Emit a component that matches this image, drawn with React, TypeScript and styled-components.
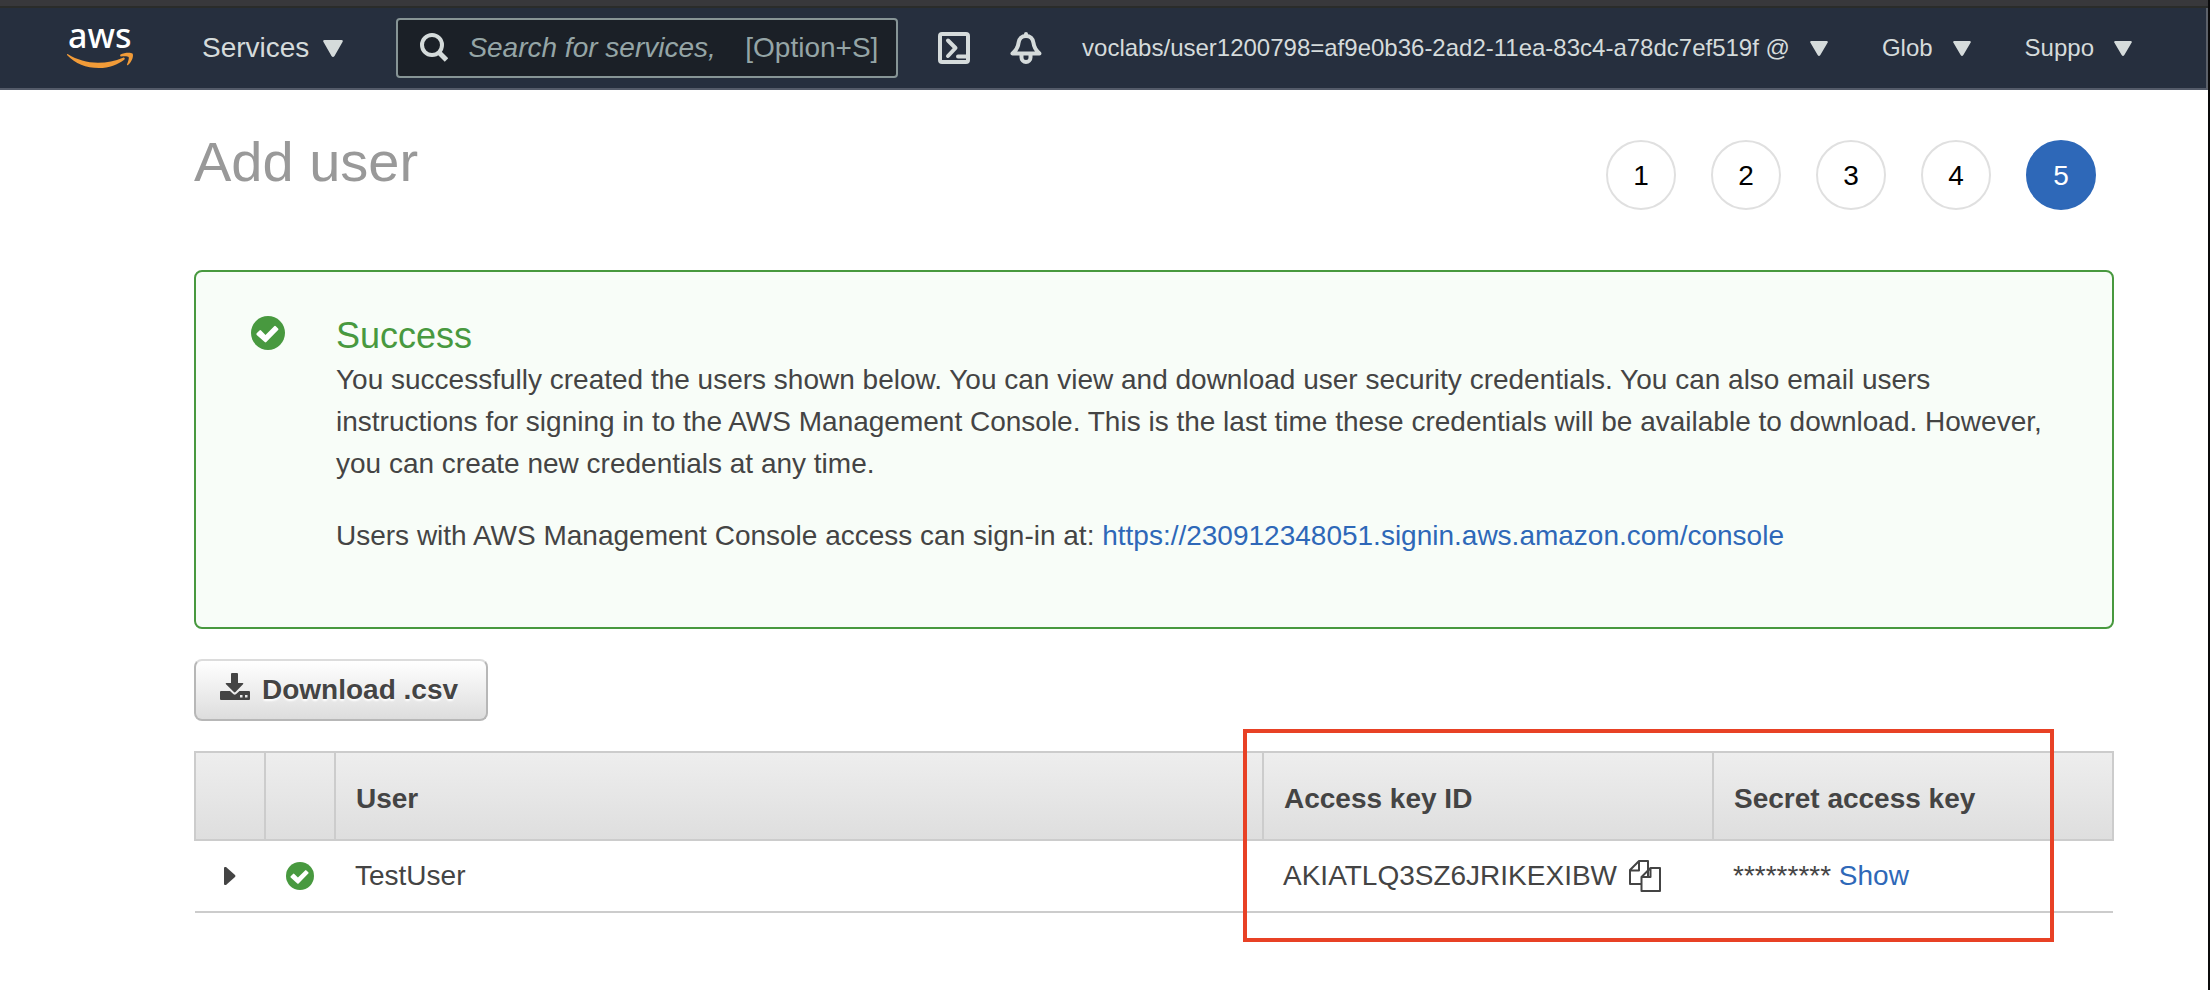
import React from "react";
import styled, { createGlobalStyle } from "styled-components";

const GlobalStyle = createGlobalStyle`
  * { box-sizing: border-box; }
  html { background: #fff; }
  body {
    margin: 0;
    font-family: "Liberation Sans", Arial, sans-serif;
    font-size: 28px;
    line-height: 42px;
    color: #444;
  }
  button, input { font: inherit; color: inherit; }
`;

const Page = styled.div`
  min-height: 100vh;
  border-right: 2px solid #0b0b0c;
`;

const WindowEdge = styled.div`
  height: 8px;
  background: #38383b;
  border-bottom: 2px solid #2a2c2a;
`;

const Header = styled.header`
  display: flex;
  align-items: center;
  height: 82px;
  padding: 0 74px 0 66px;
  background: #262f3e;
  border-bottom: 2px solid #545b69;
  border-right: 2px solid #5c616a;
  color: #d5dbdb;
`;

const LogoLink = styled.a`
  display: flex;
  margin-right: 68px;
`;

const NavButton = styled.button<{ $small?: boolean; $gap: number }>`
  display: flex;
  align-items: center;
  gap: ${(p) => p.$gap}px;
  padding: 0;
  border: 0;
  background: none;
  color: #d5dbdb;
  font-size: ${(p) => (p.$small ? 24 : 28)}px;
  line-height: 32px;
  white-space: nowrap;
`;

const SearchBox = styled.label`
  display: flex;
  align-items: center;
  width: 502px;
  height: 60px;
  margin: 0 40px 0 53px;
  padding: 0 18px 0 22px;
  background: #1b2027;
  border: 2px solid #879596;
  border-radius: 4px;
  color: #95a5a6;
`;

const SearchInput = styled.input`
  flex: 1;
  min-width: 0;
  margin: 0 20px;
  padding: 0;
  border: 0;
  outline: 0;
  background: none;
  &::placeholder {
    color: #95a5a6;
    font-style: italic;
    opacity: 1;
  }
`;

const IconButton = styled.button`
  display: flex;
  padding: 0;
  border: 0;
  background: none;
  color: inherit;
`;

const HeaderIcons = styled.div`
  display: flex;
  gap: 40px;
`;

const AccountMenus = styled.nav`
  display: flex;
  gap: 54px;
  margin-left: auto;
`;

const Main = styled.main`
  padding: 40px 94px 48px 194px;
`;

const TitleRow = styled.div`
  display: flex;
  justify-content: space-between;
  align-items: flex-start;
  padding-right: 18px;
`;

const Title = styled.h1`
  margin: 0;
  color: #999;
  font-size: 56px;
  font-weight: 400;
  line-height: 64px;
`;

const Steps = styled.ol`
  display: flex;
  gap: 35px;
  margin: 10px 0 0;
  padding: 0;
  list-style: none;
`;

const Step = styled.li<{ $active?: boolean }>`
  width: 70px;
  height: 70px;
  border: 2px solid ${(p) => (p.$active ? "#2e68b8" : "#e0e0e0")};
  border-radius: 50%;
  background: ${(p) => (p.$active ? "#2e68b8" : "#fff")};
  color: ${(p) => (p.$active ? "#fff" : "#000")};
  line-height: 68px;
  text-align: center;
`;

const Notice = styled.section`
  display: flex;
  gap: 51px;
  margin-top: 60px;
  padding: 44px 40px 70px 55px;
  background: #f8fdf8;
  border: 2px solid #48993f;
  border-radius: 8px;
`;

const NoticeIcon = styled.div`
  display: flex;
  flex: none;
  align-items: flex-start;
`;

const NoticeTitle = styled.h2`
  margin: 0 0 3px;
  color: #48993f;
  font-size: 36px;
  font-weight: 400;
  line-height: 40px;
`;

const NoticeText = styled.p`
  margin: 0 0 30px;
  &:last-child { margin: 0; }
`;

const Link = styled.a`
  color: #2e68b8;
  text-decoration: none;
`;

const DownloadButton = styled.button`
  display: flex;
  align-items: center;
  gap: 12px;
  height: 62px;
  margin: 30px 0;
  padding: 0 28px 0 24px;
  background: linear-gradient(#fff, #ddd);
  border: 2px solid #b7b7b7;
  border-top-color: #dcdcdc;
  border-radius: 8px;
  font-weight: 700;
  text-shadow: 0 2px 2px #fff;

  svg { margin-bottom: 6px; }
`;

const TableArea = styled.div`
  position: relative;
`;

const Table = styled.table`
  width: 100%;
  border-collapse: collapse;
  table-layout: fixed;
`;

const HeadCell = styled.th<{ $width?: string }>`
  width: ${(p) => p.$width ?? "auto"};
  height: 88px;
  padding: 6px 20px 0;
  border: 2px solid #ccc;
  text-align: left;
`;

const HeadRow = styled.tr`
  background: linear-gradient(#eee, #dedede);
`;

const Cell = styled.td<{ $center?: boolean }>`
  height: 72px;
  padding: 0 20px;
  border-bottom: 2px solid #ccc;
  text-align: ${(p) => (p.$center ? "center" : "left")};
  white-space: nowrap;
`;

const CellContent = styled.div<{ $center?: boolean; $gap?: number }>`
  display: flex;
  align-items: center;
  justify-content: ${(p) => (p.$center ? "center" : "flex-start")};
  gap: ${(p) => p.$gap ?? 0}px;
`;

const Highlight = styled.div`
  position: absolute;
  top: -22px;
  bottom: -29px;
  right: 60px;
  width: 811px;
  border: 4px solid #e84125;
  pointer-events: none;
`;

const Caret = ({ width, height }: { width: number; height: number }) => (
  <svg width={width} height={height} viewBox="0 0 20 17" preserveAspectRatio="none" fill="currentColor" aria-hidden="true">
    <path d="M1.500 0h17q2 .3 1 2l-8 14q-1.500 2-3 0L.5 2Q-.5.300 1.500 0z" />
  </svg>
);

const CheckCircle = ({ size }: { size: number }) => (
  <svg width={size} height={size} viewBox="0 0 34 34" aria-hidden="true">
    <circle cx="17" cy="17" r="17" fill="#48993f" />
    <path d="M5.700 17.300l2.800-2.800q.8-.8 1.600 0l4.400 4.400 8.700-8.700q.8-.8 1.600 0l2.300 2.300q.8.800 0 1.600L15.300 26q-.8.800-1.600 0l-8-7.100q-.8-.8 0-1.600z" fill="#fff" />
  </svg>
);

const LogoText = styled.text`
  font-family: "Noto Sans", "Open Sans", sans-serif;
  font-size: 34px;
  font-weight: 500;
`;

const AwsLogo = () => (
  <svg width="68" height="78" viewBox="0 -16 68 78" role="img" aria-label="aws">
    <LogoText x="2" y="23" fill="#fff">aws</LogoText>
    <path d="M2 29.200c9 5.500 19 8.500 30 8.500 9 0 17-1.700 25-5 1.500-.6 2.500 1 1.200 2C52 39.500 43 43 33 43 20 43 9 38.500 1.500 30.500c-.9-1-.4-1.900.5-1.300z" fill="#f19b38" />
    <path d="M54.500 29.500c3.500-2 10-2.500 12-1 1.500 2-.5 8.500-4.500 11.500-.7.500-1.300.2-1-.5 1-2.500 2.300-6.500 1.600-7.500-.8-1-5.100-.8-7.600-.5-.8.100-1.200-1.500-.5-2z" fill="#f19b38" />
  </svg>
);

const SearchIcon = () => (
  <svg width="28" height="30" viewBox="0 0 28 30" fill="none" stroke="#d5dbdb" aria-hidden="true">
    <circle cx="12" cy="12" r="10" strokeWidth="4" />
    <path d="M18.500 19l8 8" strokeWidth="5" />
  </svg>
);

const ShellIcon = () => (
  <svg width="32" height="32" viewBox="0 0 32 32" fill="none" stroke="currentColor" strokeWidth="4" aria-hidden="true">
    <rect x="2" y="2" width="28" height="28" rx="2" />
    <path d="M10 8.500l7.500 7.500-7.500 8" strokeLinejoin="round" strokeLinecap="round" />
    <path d="M20 24.500h9" strokeLinecap="round" />
  </svg>
);

const BellIcon = () => (
  <svg width="32" height="32" viewBox="0 0 32 32" fill="none" stroke="currentColor" strokeWidth="4" strokeLinejoin="round" aria-hidden="true">
    <path d="M16 2v2" strokeLinecap="round" />
    <path d="M2.500 21.500h27c-4-3.500-5.500-6-6-10.500-.5-4.500-3.500-7-7.500-7s-7 2.500-7.500 7c-.5 4.500-2 7-6 10.500z" />
    <path d="M11.500 22v3.500a4.500 4.500 0 0 0 9 0V22" />
  </svg>
);

const DownloadIcon = () => (
  <svg width="30" height="28" viewBox="0 0 30 28" fill="#444" aria-hidden="true">
    <path d="M12 0h5q1 0 1 1v9h4.500q1.500 0 .5 1.300L15.500 19q-.8.800-1.600 0L6 11.300Q5 10 6.500 10H11V1q0-1 1-1z" />
    <path d="M1 18h9l3.500 3.300q1.200.8 2.400 0L19.500 18H29q1 0 1 1v7q0 1-1 1H1q-1 0-1-1v-7q0-1 1-1zM20 22v2.500h2.500V22zm5 0v2.500h2.500V22z" fillRule="evenodd" />
  </svg>
);

const CopyIcon = () => (
  <svg width="32" height="32" viewBox="0 0 32 32" fill="#fff" stroke="#444" strokeWidth="2" strokeLinejoin="round" aria-hidden="true">
    <path d="M1 10l9-9h9v23H1zM1 10.500h9V1" />
    <path d="M12.500 17l9-9H31v23H12.500zM12.500 17H21.500V8" />
  </svg>
);

const ExpandIcon = () => (
  <svg width="12" height="18" viewBox="0 0 12 18" fill="#444" aria-hidden="true">
    <path d="M1 0l1 0 9 8q1 1 0 2l-9 8H1q-1 0-1-1V1q0-1 1-1z" />
  </svg>
);

const STEPS = [1, 2, 3, 4, 5];

export default function App() {
  return (
    <Page>
      <GlobalStyle />
      <WindowEdge />
      <Header>
        <LogoLink href="#"><AwsLogo /></LogoLink>
        <NavButton $gap={14}>Services<Caret width={20} height={17} /></NavButton>
        <SearchBox>
          <SearchIcon />
          <SearchInput aria-label="Search" placeholder="Search for services," />
          <span>[Option+S]</span>
        </SearchBox>
        <HeaderIcons>
          <IconButton aria-label="CloudShell"><ShellIcon /></IconButton>
          <IconButton aria-label="Notifications"><BellIcon /></IconButton>
        </HeaderIcons>
        <AccountMenus>
          <NavButton $small $gap={20}>voclabs/user1200798=af9e0b36-2ad2-11ea-83c4-a78dc7ef519f @<Caret width={18} height={15} /></NavButton>
          <NavButton $small $gap={20}>Glob<Caret width={18} height={15} /></NavButton>
          <NavButton $small $gap={20}>Suppo<Caret width={18} height={15} /></NavButton>
        </AccountMenus>
      </Header>
      <Main>
        <TitleRow>
          <Title>Add user</Title>
          <Steps>
            {STEPS.map((n) => (
              <Step key={n} $active={n === 5}>{n}</Step>
            ))}
          </Steps>
        </TitleRow>
        <Notice>
          <NoticeIcon><CheckCircle size={34} /></NoticeIcon>
          <div>
            <NoticeTitle>Success</NoticeTitle>
            <NoticeText>
              You successfully created the users shown below. You can view and download user security credentials. You can also email users instructions for signing in to the AWS Management Console. This is the last time these credentials will be available to download. However, you can create new credentials at any time.
            </NoticeText>
            <NoticeText>
              Users with AWS Management Console access can sign-in at: <Link href="#">https://230912348051.signin.aws.amazon.com/console</Link>
            </NoticeText>
          </div>
        </Notice>
        <DownloadButton><DownloadIcon />Download .csv</DownloadButton>
        <TableArea>
          <Table>
            <thead>
              <HeadRow>
                <HeadCell $width="70px" aria-label="Details" />
                <HeadCell $width="70px" aria-label="Status" />
                <HeadCell>User</HeadCell>
                <HeadCell $width="450px">Access key ID</HeadCell>
                <HeadCell $width="400px">Secret access key</HeadCell>
              </HeadRow>
            </thead>
            <tbody>
              <tr>
                <Cell $center>
                  <CellContent $center><IconButton aria-label="Expand TestUser"><ExpandIcon /></IconButton></CellContent>
                </Cell>
                <Cell $center>
                  <CellContent $center><CheckCircle size={28} /></CellContent>
                </Cell>
                <Cell>TestUser</Cell>
                <Cell>
                  <CellContent $gap={12}>AKIATLQ3SZ6JRIKEXIBW<IconButton aria-label="Copy access key ID"><CopyIcon /></IconButton></CellContent>
                </Cell>
                <Cell>********* <Link href="#">Show</Link></Cell>
              </tr>
            </tbody>
          </Table>
          <Highlight />
        </TableArea>
      </Main>
    </Page>
  );
}
